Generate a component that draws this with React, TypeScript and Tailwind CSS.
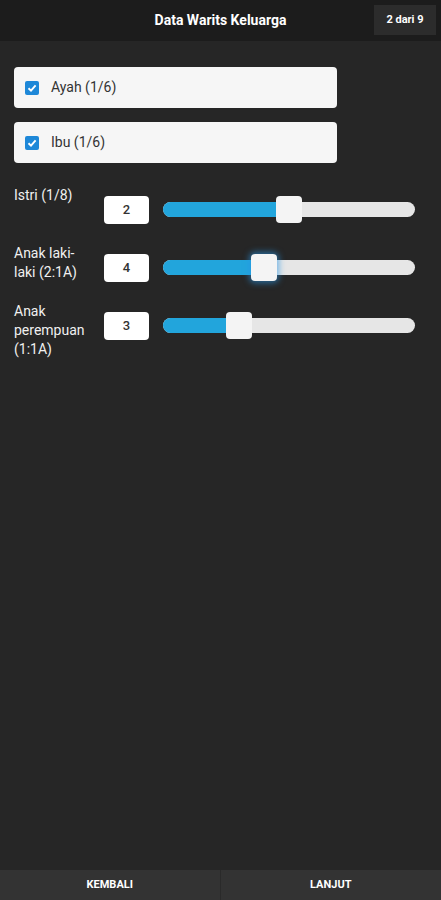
const font = { fontFamily: 'Roboto, "Liberation Sans", sans-serif' };

type Heir = { label: string[]; value: number; pct: number; focus?: boolean };

const heirs: Heir[] = [
  { label: ['Istri (1/8)'], value: 2, pct: 50 },
  { label: ['Anak laki-', 'laki (2:1A)'], value: 4, pct: 40, focus: true },
  { label: ['Anak', 'perempuan', '(1:1A)'], value: 3, pct: 30 },
];

function CheckRow({ text }: { text: string }) {
  return (
    <div className="flex h-[41px] w-[323px] items-center gap-3 rounded-[4px] bg-[#f6f6f6] px-[11px]">
      <span className="flex h-[14px] w-[14px] items-center justify-center rounded-[2px] bg-[#1e88d8]">
        <svg width="10" height="10" viewBox="0 0 10 10">
          <path d="M1.5 5.2 L4 7.6 L8.6 2.4" fill="none" stroke="#fff" strokeWidth="1.9" />
        </svg>
      </span>
      <span className="text-[14px] text-[#333]">{text}</span>
    </div>
  );
}

function SliderRow({ heir }: { heir: Heir }) {
  return (
    <div className="flex items-start">
      <div className="w-[90px] text-[14px] leading-[19px] text-[#f0f0f0]">
        {heir.label.map(l => (
          <div key={l}>{l}</div>
        ))}
      </div>
      <div className="mt-[10px] flex h-[28px] w-[45px] items-center justify-center rounded-[4px] bg-white text-[13px] font-medium text-[#333]">
        {heir.value}
      </div>
      <div className="relative ml-[14px] mt-[16px] h-[15px] w-[252px] rounded-full bg-[#e6e6e6]">
        <div className="h-full rounded-l-full bg-[#22a5dc]" style={{ width: `${heir.pct}%` }} />
        <div
          className={`absolute top-[-6px] h-[27px] w-[26px] rounded-[4px] bg-[#f4f4f4] ${
            heir.focus ? 'shadow-[0_0_6px_2px_rgba(40,150,230,0.6)]' : ''
          }`}
          style={{ left: `calc(${heir.pct}% - 13px)` }}
        />
      </div>
    </div>
  );
}

export default function App() {
  return (
    <div className="flex h-[900px] w-[441px] flex-col bg-[#262626]" style={font}>
      <div className="relative flex h-[41px] items-center justify-center bg-[#1c1c1c]">
        <span className="text-[14px] font-bold text-white">Data Warits Keluarga</span>
        <span className="absolute right-[5px] top-[5px] flex h-[30px] w-[62px] items-center justify-center bg-[#2c2c2c] text-[11px] font-bold text-white">
          2 dari 9
        </span>
      </div>

      <div className="flex flex-1 flex-col px-[14px] pt-[26px]">
        <div className="flex flex-col gap-[14px]">
          <CheckRow text="Ayah (1/6)" />
          <CheckRow text="Ibu (1/6)" />
        </div>
        <div className="mt-[23px] flex flex-col gap-[20px]">
          {heirs.map(h => (
            <SliderRow key={h.label.join(' ')} heir={h} />
          ))}
        </div>
      </div>

      <div className="grid h-[30px] grid-cols-2 bg-[#333333] text-[11px] font-bold text-white">
        <button className="border-r border-[#2a2a2a]">KEMBALI</button>
        <button>LANJUT</button>
      </div>
    </div>
  );
}
